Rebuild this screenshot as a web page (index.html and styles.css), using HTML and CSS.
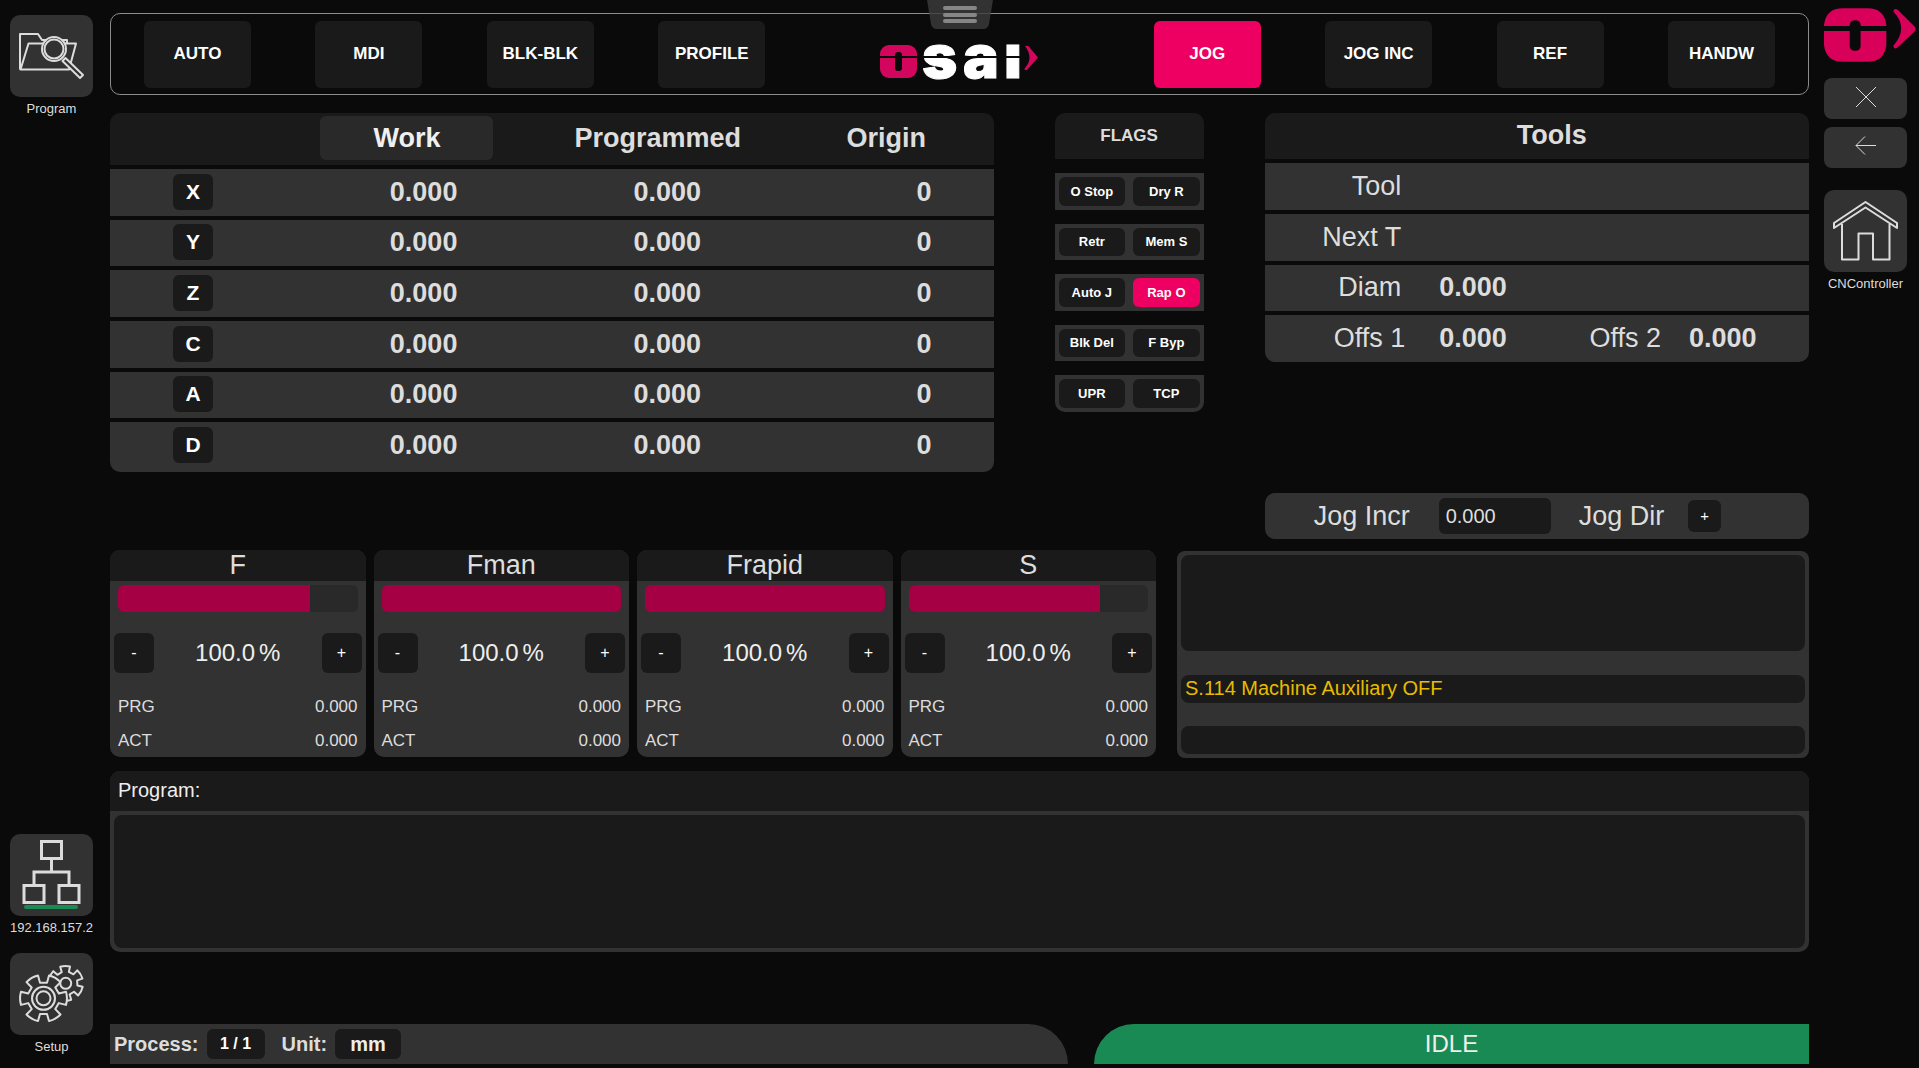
FILE: index.html
```html
<!DOCTYPE html>
<html lang="en">
<head>
<meta charset="utf-8">
<meta name="viewport" content="width=device-width, initial-scale=1">
<title>CNController</title>
<link rel="stylesheet" href="styles.css">
</head>
<body>
<button class="menu-handle" type="button" aria-label="Open menu">
  <svg width="66" height="29" viewBox="0 0 66 29"><path class="handle-shape" d="M0 0H66L62 24Q61 29 56 29H10Q5 29 4 24Z"/><path class="handle-bars" d="M18 8H48M18 15H48M18 21H48"/></svg>
</button>

<div class="app">
  <aside class="rail rail-left">
    <div class="rail-item">
      <button class="tile" type="button" aria-labelledby="lbl-program">
        <svg class="line-icon" width="83" height="82" viewBox="0 0 83 82">
          <path d="M10 54.500V19H28L32 25H57V28M10.500 54.500L18.500 28.500H66L59 54.500Z"/>
          <circle class="cover" cx="44" cy="34" r="12"/><circle cx="44" cy="34" r="9.500"/>
          <path class="cover" d="M52.500 46L55.500 43L73 60L70 63Z"/>
        </svg>
      </button>
      <span class="rail-label" id="lbl-program">Program</span>
    </div>
    <div class="rail-bottom">
      <div class="rail-item">
        <button class="tile" type="button" aria-labelledby="lbl-net">
          <svg class="line-icon net" width="83" height="82" viewBox="0 0 83 82">
            <path d="M31.500 7.500H51.500V24.500H31.500ZM14 51.500H34V68.500H14ZM49 51.500H69V68.500H49ZM41.500 24.500V38M24 51V38H59V51"/>
            <path class="online" d="M16 73H66"/>
          </svg>
        </button>
        <span class="rail-label" id="lbl-net">192.168.157.2</span>
      </div>
      <div class="rail-item">
        <button class="tile" type="button" aria-labelledby="lbl-setup">
          <svg class="line-icon gears" width="83" height="82" viewBox="0 0 83 82">
            <defs>
              <path id="gear" vector-effect="non-scaling-stroke" d="M-5.500 -22.800L-3.500 -15.600H3.500L5.500 -22.800A23.500 23.500 0 0 1 17 -16.200L11.800 -10.800L15.300 -4.800L22.500 -6.600A23.500 23.500 0 0 1 22.500 6.600L15.300 4.800L11.800 10.800L17 16.200A23.500 23.500 0 0 1 5.500 22.800L3.500 15.600H-3.500L-5.500 22.800A23.500 23.500 0 0 1 -17 16.200L-11.800 10.800L-15.300 4.800L-22.500 6.600A23.500 23.500 0 0 1 -22.500 -6.600L-15.300 -4.800L-11.800 -10.800L-17 -16.200A23.500 23.500 0 0 1 -5.500 -22.800Z"/>
            </defs>
            <use href="#gear" transform="translate(55.700 30.300) rotate(28) scale(.74)"/>
            <circle cx="55.700" cy="30.300" r="5.500"/>
            <use class="cover" href="#gear" transform="translate(33.500 45.300)"/>
            <circle cx="33.500" cy="45.300" r="11.500"/><circle cx="33.500" cy="45.300" r="7"/>
          </svg>
        </button>
        <span class="rail-label" id="lbl-setup">Setup</span>
      </div>
    </div>
  </aside>

  <main class="main">
    <nav class="modes" aria-label="Operating mode">
      <div class="mode-group">
        <button class="mode" type="button">AUTO</button>
        <button class="mode" type="button">MDI</button>
        <button class="mode" type="button">BLK-BLK</button>
        <button class="mode" type="button">PROFILE</button>
      </div>
      <svg class="brand" role="img" aria-label="osai" width="160" height="34" viewBox="0 0 160 34">
        <rect class="pink" x="1" y="0" width="37" height="33" rx="9"/>
        <rect class="gap" x="16" y="7" width="7" height="19" rx="3"/>
        <text class="brand-text" x="43 84 125" y="33">saı</text>
        <rect class="gap" x="0" y="11" width="144" height="2"/>
        <path class="pink" d="M146 1Q150 0 151 3L159 12.500L148 25Q144 25 146 23Q155 13 146 1Z"/>
      </svg>
      <div class="mode-group">
        <button class="mode active" type="button" aria-pressed="true">JOG</button>
        <button class="mode" type="button">JOG INC</button>
        <button class="mode" type="button">REF</button>
        <button class="mode" type="button">HANDW</button>
      </div>
    </nav>

    <div class="status-row">
      <table class="axes">
        <colgroup><col class="c-axis"><col class="c-work"><col class="c-prog"><col class="c-orig"></colgroup>
        <thead><tr><th></th><th><button class="head-btn" type="button">Work</button></th><th>Programmed</th><th>Origin</th></tr></thead>
        <tbody>
          <tr><th scope="row"><button class="axis" type="button">X</button></th><td>0.000</td><td>0.000</td><td>0</td></tr>
          <tr><th scope="row"><button class="axis" type="button">Y</button></th><td>0.000</td><td>0.000</td><td>0</td></tr>
          <tr><th scope="row"><button class="axis" type="button">Z</button></th><td>0.000</td><td>0.000</td><td>0</td></tr>
          <tr><th scope="row"><button class="axis" type="button">C</button></th><td>0.000</td><td>0.000</td><td>0</td></tr>
          <tr><th scope="row"><button class="axis" type="button">A</button></th><td>0.000</td><td>0.000</td><td>0</td></tr>
          <tr><th scope="row"><button class="axis" type="button">D</button></th><td>0.000</td><td>0.000</td><td>0</td></tr>
        </tbody>
      </table>

      <section class="flags">
        <h2 class="flags-title">FLAGS</h2>
        <div class="flag-row"><button class="flag" type="button">O Stop</button><button class="flag" type="button">Dry R</button></div>
        <div class="flag-row"><button class="flag" type="button">Retr</button><button class="flag" type="button">Mem S</button></div>
        <div class="flag-row"><button class="flag" type="button">Auto J</button><button class="flag active" type="button" aria-pressed="true">Rap O</button></div>
        <div class="flag-row"><button class="flag" type="button">Blk Del</button><button class="flag" type="button">F Byp</button></div>
        <div class="flag-row"><button class="flag" type="button">UPR</button><button class="flag" type="button">TCP</button></div>
      </section>

      <div class="tool-col">
        <table class="tools">
          <colgroup><col class="t-first"><col class="t-value"><col class="t-second"><col></colgroup>
          <thead><tr><th colspan="4">Tools</th></tr></thead>
          <tbody>
            <tr><th scope="row">Tool</th><td colspan="3"></td></tr>
            <tr><th scope="row">Next T</th><td colspan="3"></td></tr>
            <tr><th scope="row">Diam</th><td colspan="3">0.000</td></tr>
            <tr><th scope="row">Offs 1</th><td>0.000</td><th scope="row">Offs 2</th><td class="near">0.000</td></tr>
          </tbody>
        </table>
        <div class="jog">
          <label for="jog-incr">Jog Incr</label>
          <input id="jog-incr" type="text" value="0.000">
          <span class="jog-dir">Jog Dir</span>
          <button class="jog-btn" type="button">+</button>
        </div>
      </div>
    </div>

    <div class="feed-row">
      <div class="overrides">
        <section class="card">
          <h2>F</h2>
          <div class="meter"><div class="fill" style="width:80%"></div></div>
          <div class="adjust"><button type="button">-</button><p class="percent"><span>100.0</span><span>%</span></p><button type="button">+</button></div>
          <dl><div><dt>PRG</dt><dd>0.000</dd></div><div><dt>ACT</dt><dd>0.000</dd></div></dl>
        </section>
        <section class="card">
          <h2>Fman</h2>
          <div class="meter"><div class="fill" style="width:100%"></div></div>
          <div class="adjust"><button type="button">-</button><p class="percent"><span>100.0</span><span>%</span></p><button type="button">+</button></div>
          <dl><div><dt>PRG</dt><dd>0.000</dd></div><div><dt>ACT</dt><dd>0.000</dd></div></dl>
        </section>
        <section class="card">
          <h2>Frapid</h2>
          <div class="meter"><div class="fill" style="width:100%"></div></div>
          <div class="adjust"><button type="button">-</button><p class="percent"><span>100.0</span><span>%</span></p><button type="button">+</button></div>
          <dl><div><dt>PRG</dt><dd>0.000</dd></div><div><dt>ACT</dt><dd>0.000</dd></div></dl>
        </section>
        <section class="card">
          <h2>S</h2>
          <div class="meter"><div class="fill" style="width:80%"></div></div>
          <div class="adjust"><button type="button">-</button><p class="percent"><span>100.0</span><span>%</span></p><button type="button">+</button></div>
          <dl><div><dt>PRG</dt><dd>0.000</dd></div><div><dt>ACT</dt><dd>0.000</dd></div></dl>
        </section>
      </div>
      <section class="messages" aria-label="Messages">
        <div class="msg msg-log"></div>
        <div class="msg warn">S.114 Machine Auxiliary OFF</div>
        <div class="msg"></div>
      </section>
    </div>

    <section class="program">
      <h2>Program:</h2>
      <div class="listing"></div>
    </section>

    <footer class="footer">
      <div class="process"><span>Process:</span><button class="chip chip-small" type="button">1 / 1</button><span class="unit">Unit:</span><button class="chip" type="button">mm</button></div>
      <div class="state">IDLE</div>
    </footer>
  </main>

  <aside class="rail rail-right">
    <svg class="emblem" role="img" aria-label="OSAI" width="92" height="55" viewBox="0 0 93 55">
      <path class="crimson" d="M0 18V17Q2 0 19 0H44Q61 0 63 17V18ZM0 23H63V37Q61 54 44 54H19Q2 54 0 37Z"/>
      <rect class="gap" x="26" y="12" width="11" height="31" rx="5"/>
      <path class="crimson" d="M70 3Q71 -1 75 2L91 18Q94 21 91 24L74 40Q71 42 70 38Q86 20 70 3Z"/>
    </svg>
    <button class="tile tile-short" type="button" aria-label="Close"><svg class="thin-icon" width="22" height="22" viewBox="0 0 22 22"><path d="M1 1L21 21M21 1L1 21"/></svg></button>
    <button class="tile tile-short" type="button" aria-label="Back"><svg class="thin-icon" width="22" height="22" viewBox="0 0 22 22"><path d="M21 10.500H1M10 1.500L1 10.500L10 19.500"/></svg></button>
    <div class="rail-item home">
      <button class="tile" type="button" aria-labelledby="lbl-home">
        <svg class="line-icon" width="83" height="82" viewBox="0 0 83 82">
          <path d="M41.500 12L73 33V38L41.500 17.500L10 38V33ZM18 34V69.500H34.500V43.500H49V69.500H65.500V34"/>
        </svg>
      </button>
      <span class="rail-label" id="lbl-home">CNController</span>
    </div>
  </aside>
</div>
</body>
</html>
```

FILE: styles.css
```css
:root {
  --bg: #0a0a0a;
  --dark: #1a1a1a;
  --panel: #323232;
  --text: #dddddd;
  --accent: #ee0062;
}

* { box-sizing: border-box; }

body {
  margin: 0;
  background: var(--bg);
  color: var(--text);
  font-family: "Liberation Sans", Arial, sans-serif;
  font-size: 20px;
}

h2, p, dl, dd { margin: 0; }

button {
  border: 0;
  padding: 0;
  border-radius: 6px;
  background: var(--dark);
  color: #fff;
  font: bold 17px/20px "Liberation Sans", Arial, sans-serif;
  cursor: pointer;
}

svg { display: block; }

.app {
  display: grid;
  grid-template-columns: 110px minmax(0, 1fr) 110px;
  min-height: 100vh;
}

/* Pull-down menu tab over the top bar */
.menu-handle {
  position: absolute;
  top: 0;
  left: 50%;
  margin-left: -33px;
  background: none;
}
.handle-shape { fill: #3c3c3c; fill-opacity: .8; }
.handle-bars { stroke: #868686; stroke-width: 4; stroke-linecap: round; }

/* Side rails */
.rail { display: flex; flex-direction: column; }
.rail-left { padding: 15px 17px 13px 10px; justify-content: space-between; }
.rail-right { padding: 8px 3px 0 15px; }
.rail-item {
  display: flex;
  flex-direction: column;
  align-items: center;
  width: 83px;
  gap: 4px;
}
.rail-bottom { display: flex; flex-direction: column; gap: 17px; }
.rail-label { font-size: 13px; line-height: 16px; white-space: nowrap; }
.tile {
  display: flex;
  align-items: center;
  justify-content: center;
  width: 83px;
  height: 82px;
  border-radius: 10px;
  background: var(--panel);
}
.tile-short { height: 41px; padding-bottom: 4px; margin-bottom: 8px; border-radius: 8px; }
.emblem { margin-bottom: 15px; }
.home { margin-top: 14px; }
.line-icon { fill: none; stroke: #dcdcdc; stroke-width: 2; stroke-linejoin: round; }
.line-icon .cover { fill: var(--panel); }
.net { stroke-width: 3; stroke-linejoin: miter; }
.net .online { stroke: #1a8a55; stroke-width: 4; stroke-linecap: round; }
.thin-icon { fill: none; stroke: #dcdcdc; stroke-width: 1; }
.crimson { fill: #d80058; }
.pink { fill: #d3065e; }
.gap { fill: var(--bg); }

.main {
  display: flex;
  flex-direction: column;
  padding: 13px 0 4px;
}

/* Mode bar */
.modes {
  display: grid;
  grid-template-columns: 8fr 5fr 8fr;
  align-items: center;
  height: 82px;
  padding: 0 33px;
  border: 1px solid #8c8c8c;
  border-radius: 10px;
}
.mode-group { display: flex; justify-content: space-between; }
.mode { width: 107px; height: 67px; }
.active { background: var(--accent); }
.brand { justify-self: center; margin-top: 16px; overflow: visible; }
.brand-text {
  fill: #fff;
  stroke: #fff;
  stroke-width: 1px;
  font: 900 60px Inter, sans-serif;
}

/* Axis, flag and tool panels */
.status-row {
  display: grid;
  grid-template-columns: 883fr 149fr 544fr;
  gap: 61px;
  align-items: start;
  margin-top: 18px;
}
table {
  width: 100%;
  table-layout: fixed;
  border-collapse: separate;
  border-spacing: 0 4px;
  margin: -4px 0;
  font-size: 27px;
  line-height: 30px;
}
th, td { padding: 0 0 2px; background: var(--panel); height: 47px; }
thead th { background: var(--dark); }
thead th:first-child { border-top-left-radius: 10px; }
thead th:last-child { border-top-right-radius: 10px; }
tbody tr:last-child > :first-child { border-bottom-left-radius: 10px; }
tbody tr:last-child > :last-child { border-bottom-right-radius: 10px; }

.c-axis { width: 21%; }
.c-work { width: 25%; }
.c-prog { width: 32%; }
.c-orig { width: 22%; }
.axes thead th { height: 52px; }
.axes thead th:last-child { padding-right: 20px; }
.axes tbody tr:nth-child(3n+2) > * { height: 46px; }
.axes tbody tr:last-child > * { height: 50px; padding-bottom: 4px; }
.axes td { text-align: right; font-weight: bold; }
.axes td:nth-child(2) { padding-right: 59px; }
.axes td:nth-child(3) { padding-right: 98px; }
.axes td:nth-child(4) { padding-right: 62px; }
.axes tbody th { padding-left: 63px; text-align: left; }
.axes tbody button { display: block; }
.axis { width: 40px; height: 36px; font-size: 21px; }
.head-btn {
  width: 173px;
  height: 44px;
  margin-left: 2px;
  background: #292929;
  color: #f0f0f0;
  font-size: 27px;
  line-height: 30px;
  vertical-align: middle;
}

.flags { display: flex; flex-direction: column; gap: 14px; }
.flags-title {
  height: 46px;
  border-radius: 10px 10px 0 0;
  background: var(--dark);
  font-size: 17px;
  line-height: 46px;
  text-align: center;
}
.flag-row {
  display: grid;
  grid-template-columns: 1fr 1fr;
  gap: 8px;
  padding: 4px;
  background: var(--panel);
}
.flag-row:last-child { border-radius: 0 0 10px 10px; }
.flag { height: 28px; font-size: 13px; line-height: 16px; }
.flag-row:nth-child(even) .flag { height: 29px; }

.tools th { height: 46px; }
.tools thead th { padding-left: 30px; }
.tools tbody tr > * { height: 47px; }
.tools tbody tr:nth-child(3) > * { height: 46px; }
.t-first { width: 26%; }
.t-value { width: 22%; }
.t-second { width: 25%; }
.tools tbody th { padding-right: 5px; text-align: right; font-weight: normal; }
.tools tbody tr:last-child th { padding-right: 1px; }
.tools td { padding-left: 33px; font-weight: bold; }
.tools .near { padding-left: 27px; }

.jog {
  display: flex;
  align-items: center;
  height: 46px;
  margin-top: 131px;
  padding-left: 49px;
  border-radius: 10px;
  background: var(--panel);
  font-size: 27px;
  line-height: 30px;
  white-space: nowrap;
}
.jog input {
  width: 112px;
  height: 36px;
  margin: 0 28px 0 29px;
  padding: 0 7px;
  border: 0;
  border-radius: 6px;
  background: var(--dark);
  color: var(--text);
  font: 20px "Liberation Sans", Arial, sans-serif;
}
.jog-btn { width: 33px; height: 32px; margin-left: 24px; font-size: 15px; font-weight: normal; }

/* Override cards and messages */
.feed-row {
  display: grid;
  grid-template-columns: 1046fr 632fr;
  gap: 21px;
  margin-top: 11px;
}
.overrides { display: grid; grid-template-columns: repeat(4, 1fr); gap: 8px; }
.card {
  height: 207px;
  border-radius: 10px;
  background: var(--panel);
  overflow: hidden;
}
.card h2 {
  height: 31px;
  background: var(--dark);
  font-size: 27px;
  line-height: 30px;
  font-weight: normal;
  text-align: center;
}
.meter {
  height: 27px;
  margin: 4px 8px 21px;
  border-radius: 6px;
  background: #292929;
  overflow: hidden;
}
.fill { height: 100%; background: #a50044; }
.adjust {
  display: flex;
  justify-content: space-between;
  align-items: center;
  padding: 0 4px;
}
.adjust button { width: 40px; height: 40px; font-size: 16px; font-weight: normal; }
.percent { display: flex; gap: 4px; color: #eee; font-size: 24px; line-height: 40px; }
.card dl { padding: 17px 8px 0; font-size: 17px; line-height: 34px; }
.card dl div { display: flex; justify-content: space-between; }

.messages {
  display: flex;
  flex-direction: column;
  justify-content: space-between;
  margin-top: 1px;
  height: 207px;
  padding: 4px;
  border-radius: 8px;
  background: var(--panel);
}
.msg { height: 28px; border-radius: 8px; background: var(--dark); }
.msg-log { height: 96px; }
.warn { padding-left: 4px; color: #e6bb00; line-height: 27px; }

.program {
  margin-top: 13px;
  padding: 0 4px 4px;
  border-radius: 10px;
  background: var(--panel);
}
.program h2 {
  height: 40px;
  margin: 0 -4px 4px;
  padding-left: 8px;
  border-radius: 10px 10px 0 0;
  background: var(--dark);
  color: #eee;
  font-size: 20px;
  line-height: 38px;
  font-weight: normal;
}
.listing { height: 133px; border-radius: 8px; background: var(--dark); }

.footer {
  display: grid;
  grid-template-columns: 958fr 715fr;
  gap: 26px;
  margin-top: auto;
}
.process {
  display: flex;
  align-items: center;
  height: 40px;
  padding: 0 4px;
  border-radius: 0 40px 0 0;
  background: var(--panel);
  font-weight: bold;
}
.chip { width: 66px; height: 30px; margin-left: 8px; font-size: 20px; color: #eee; }
.chip-small { width: 58px; font-size: 16px; color: #fff; }
.unit { margin-left: 17px; }
.state {
  border-radius: 40px 0 0 0;
  background: #1a8a55;
  color: #eee;
  font-size: 24px;
  line-height: 40px;
  text-align: center;
}
```
